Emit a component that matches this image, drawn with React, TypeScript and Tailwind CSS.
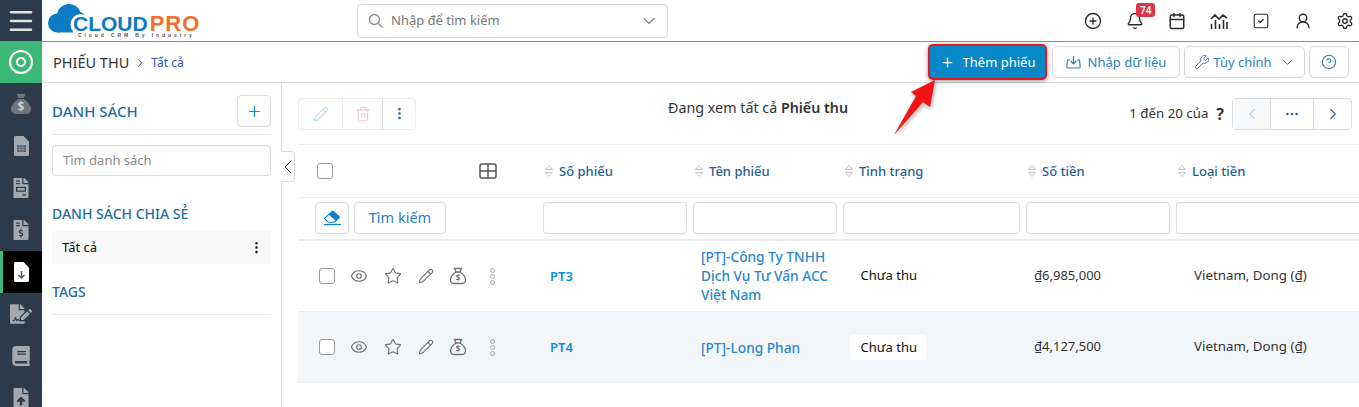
import { Bell, Calendar, ChevronDown, ChevronLeft, ChevronRight, CirclePlus, CircleHelp, Ellipsis, EllipsisVertical, Eye, Menu, Pencil, Plus, Settings, SquareCheck, Star, Trash2, UserRound, Wrench } from "lucide-react";
import { FaBook, FaFileInvoice, FaFileInvoiceDollar, FaFileSignature, FaFileUpload } from "react-icons/fa";

function SortIcon() {
  return (
    <svg width="10" height="14" viewBox="0 0 10 14" fill="none" stroke="#c4c4c4" strokeWidth="1" className="shrink-0">
      <path d="M1.500 5.500 5 1.500l3.500 4z" />
      <path d="M1.500 8.500 5 12.500l3.500-4z" />
    </svg>
  );
}

function BagIcon() {
  return (
    <svg width="18" height="18" viewBox="0 0 18 18" fill="none" stroke="#707070" strokeWidth="1.300" className="-ml-[1px]">
      <path d="M5.500 1.500h7L11 5H7z" />
      <path d="M7 5C4 7 1.500 10 1.500 13c0 2.500 2 3.500 4 3.500h7c2 0 4-1 4-3.500 0-3-2.500-6-5.500-8" />
      <text x="9" y="14" fontSize="8" textAnchor="middle" fill="#707070" stroke="none" fontWeight="700">$</text>
    </svg>
  );
}

function SideBag() {
  return (
    <svg width="22" height="22" viewBox="0 0 22 22">
      <path d="M6.500 1h9L13.500 5h-5z" fill="#6e747a" />
      <path d="M8.500 6h5C17 8 21 12 21 16c0 3.500-2.500 5-5 5H6c-2.500 0-5-1.500-5-5 0-4 4-8 7.500-10z" fill="#6e747a" />
      <text x="11" y="18" fontSize="12" textAnchor="middle" fill="#c9cdd1" fontWeight="700">$</text>
    </svg>
  );
}

function SideCalcFile() {
  return (
    <svg width="15" height="20" viewBox="0 0 15 20">
      <path d="M1.500 0H9.500L15 5.500V18.500c0 .8-.7 1.500-1.500 1.500h-12C.7 20 0 19.300 0 18.500v-17C0 .7.700 0 1.500 0z" fill="#a5a9af" />
      <path d="M3 9h9v7H3z" fill="#565d65" />
      <path d="M3 11.300h9M3 13.700h9M6 9v7M9 9v7" stroke="#a5a9af" strokeWidth=".6" />
    </svg>
  );
}

function ActiveFile() {
  return (
    <svg width="15" height="20" viewBox="0 0 15 20">
      <path d="M1.500 0H9.500L15 5.500V18.500c0 .8-.7 1.500-1.500 1.500h-12C.7 20 0 19.300 0 18.500v-17C0 .7.700 0 1.500 0z" fill="#fff" />
      <path d="M7.500 9v7M4.500 13l3 3 3-3" fill="none" stroke="#5a5a5a" strokeWidth="1.500" />
    </svg>
  );
}

function EraserIcon() {
  return (
    <svg width="19" height="17" viewBox="0 0 19 17">
      <path d="M1.500 9.500 8.700 2c.5-.5 1.300-.5 1.800 0l6 5.200c.5.5.5 1.200 0 1.700L12 13z" fill="#0d7fc4" />
      <path d="M1.500 9.500 5.200 13.300H11.500L13.200 11.500 6 5z" fill="#fff" stroke="#0d7fc4" strokeWidth="1.100" />
      <path d="M1 15.500h17" stroke="#0d7fc4" strokeWidth="1.300" />
    </svg>
  );
}

function Checkbox({ white }: { white?: boolean }) {
  return <div className={`w-4 h-4 rounded-[3px] border border-[#9a9a9a] ${white ? "bg-white" : ""}`}></div>;
}

function RowActions() {
  return (
    <div className="flex items-center w-[239px] pl-[21px]">
      <Checkbox white />
      <div className="flex items-center ml-[15px] gap-[16px] text-[#707070]">
        <Eye size={18} strokeWidth={1.600} />
        <Star size={18} strokeWidth={1.500} />
        <Pencil size={16} strokeWidth={1.600} />
        <BagIcon />
      </div>
      <div className="ml-[23px] flex flex-col gap-[1px]">
        <span className="w-[5px] h-[5px] rounded-full border border-[#aaa]"></span>
        <span className="w-[5px] h-[5px] rounded-full border border-[#aaa]"></span>
        <span className="w-[5px] h-[5px] rounded-full border border-[#aaa]"></span>
      </div>
    </div>
  );
}

function HeadCell({ label, w }: { label: string; w: string }) {
  return (
    <div className={`flex items-center gap-[5px] pl-[7px] font-medium text-[#1f5f8f] text-[13px] shrink-0 ${w}`}>
      <SortIcon />
      <span className="mt-[2px]">{label}</span>
    </div>
  );
}

const sideIcons = [
  <SideBag />,
  <SideCalcFile />,
  <FaFileInvoice size={20} />,
  <FaFileInvoiceDollar size={20} />,
];

export default function App() {
  return (
    <div className="relative w-[1359px] h-[407px] overflow-hidden bg-white flex text-[13px] text-[#222]" style={{ fontFamily: '"Noto Sans", sans-serif' }}>
      {/* Sidebar */}
      <div className="w-[42px] shrink-0 bg-[#2c3b4b] flex flex-col">
        <div className="h-[41px] shrink-0 flex items-center justify-center text-[#dfe3e6]">
          <Menu size={30} strokeWidth={2} />
        </div>
        <div className="h-[42px] shrink-0 bg-[#3cb878] flex items-center justify-center">
          <div className="w-[24px] h-[24px] rounded-full border-2 border-white flex items-center justify-center">
            <div className="w-[10px] h-[10px] rounded-full border-2 border-white"></div>
          </div>
        </div>
        {sideIcons.map((icon, i) => (
          <div key={i} className="h-[42px] shrink-0 flex items-center justify-center text-[#a5a9af]">{icon}</div>
        ))}
        <div className="h-[42px] shrink-0 bg-black border-l-[3px] border-[#3cb878] flex items-center justify-center pr-[3px]">
          <ActiveFile />
        </div>
        <div className="h-[42px] shrink-0 flex items-center justify-center text-[#a5a9af]"><FaFileSignature size={22} /></div>
        <div className="h-[42px] shrink-0 flex items-center justify-center text-[#a5a9af]"><FaBook size={20} /></div>
        <div className="h-[42px] shrink-0 flex items-center justify-center text-[#a5a9af]"><FaFileUpload size={20} /></div>
      </div>

      <div className="flex-1 min-w-0 flex flex-col">
        {/* Top bar */}
        <div className="h-[42px] border-b border-[#5fa882] flex items-center shrink-0">
          <div className="relative w-[315px] h-[41px] shrink-0">
            <svg width="40" height="34" viewBox="0 0 40 34" className="absolute left-[6px] top-[3px]">
              <circle cx="9.500" cy="20" r="9.500" fill="#0b7cc4" />
              <circle cx="21" cy="13" r="12" fill="#0b7cc4" />
              <circle cx="31" cy="16" r="7" fill="#0b7cc4" />
              <rect x="9" y="20" width="16" height="9.500" fill="#0b7cc4" />
              <circle cx="33" cy="21.500" r="10.500" fill="#fff" />
            </svg>
            <div className="absolute left-[31px] top-[16px] flex font-bold text-[21px] leading-[16px]" style={{ fontFamily: '"Liberation Sans", sans-serif' }}>
              <span className="text-[#0b7cc4]">CLOUD</span>
              <span className="text-[#f26f2e] ml-[2px] text-[22px] tracking-[1px]">PRO</span>
            </div>
            <div className="absolute left-[36px] top-[33px] text-[5px] leading-[5px] tracking-[2.900px] text-[#555] font-bold whitespace-nowrap" style={{ fontFamily: '"Liberation Sans", sans-serif' }}>Cloud CRM By Industry</div>
          </div>
          <div className="w-[311px] h-[34px] border border-[#d9d9d9] rounded-[4px] flex items-center pl-[10px] pr-[8px] text-[#777]">
            <svg width="16" height="16" viewBox="0 0 16 16" fill="none" stroke="#888" strokeWidth="1.300"><circle cx="6.500" cy="6.500" r="5" /><path d="m10.500 10.500 4 4" /></svg>
            <span className="ml-[7px] flex-1">Nhập để tìm kiếm</span>
            <ChevronDown size={20} strokeWidth={1.300} className="text-[#888]" />
          </div>
          <div className="ml-auto flex items-center gap-[24px] pr-[5px] text-[#2b2b2b]">
            <CirclePlus size={18} strokeWidth={1.800} />
            <div className="relative">
              <Bell size={18} strokeWidth={1.800} />
              <span className="absolute left-[10px] -top-[9px] h-[14px] px-[4px] rounded-[3px] bg-[#dc3545] text-white text-[10px] leading-[14px] font-semibold">74</span>
            </div>
            <Calendar size={18} strokeWidth={2} />
            <svg width="18" height="18" viewBox="0 0 18 18" fill="none" stroke="#2b2b2b" strokeWidth="1.600">
              <path d="M1 7l4-4 4 4 4-4 4 3" />
              <path d="M1.500 17v-5M5.500 17V8M9.500 17v-5M13.500 17V8M17 17v-7" />
            </svg>
            <SquareCheck size={18} strokeWidth={1.500} />
            <UserRound size={18} strokeWidth={1.800} />
            <Settings size={18} strokeWidth={1.800} />
          </div>
        </div>

        {/* Breadcrumb bar */}
        <div className="h-[41px] border-b border-[#dedede] flex items-center shrink-0">
          <div className="pl-[11px] mt-[2px] text-[14.500px] text-[#333]">PHIẾU THU</div>
          <ChevronRight size={14} strokeWidth={1.700} className="ml-[4px] mt-[2px] text-[#444]" />
          <div className="ml-[4px] mt-[2px] text-[12px] text-[#2a55c5]">Tất cả</div>
          <div className="ml-auto flex items-center pr-[10px] text-[13px]">
            <button className="w-[119px] h-[36px] rounded-[5px] border-2 border-[#e01b24] bg-[#0788c9] text-white flex items-center justify-center gap-[8px] shadow-[0_1px_5px_rgba(0,0,0,0.45)]">
              <Plus size={15} strokeWidth={2} />
              <span className="mt-[1px]">Thêm phiếu</span>
            </button>
            <button className="ml-[5px] w-[128px] h-[32px] rounded-[5px] border border-[#d9d9d9] text-[#2a7fc0] flex items-center justify-center gap-[7px]">
              <svg width="15" height="14" viewBox="0 0 15 14" fill="none" stroke="#2a7fc0" strokeWidth="1.200">
                <path d="M7.500 1v7.500M4.500 6l3 3 3-3" />
                <path d="M4 5H1.500L.8 11.500c0 .8.500 1.500 1.200 1.500h11c.7 0 1.200-.7 1.200-1.500L13.500 5H11" />
              </svg>
              <span className="mt-[1px]">Nhập dữ liệu</span>
            </button>
            <button className="ml-[4px] w-[121px] h-[32px] rounded-[5px] border border-[#d9d9d9] text-[#2a7fc0] flex items-center justify-center gap-[3px]">
              <Wrench size={16} strokeWidth={1.400} />
              <span className="mt-[1px]">Tùy chỉnh</span>
              <ChevronDown size={15} strokeWidth={1.600} className="ml-[5px]" />
            </button>
            <button className="ml-[4px] w-[40px] h-[32px] rounded-[5px] border border-[#d9d9d9] text-[#2a7fc0] flex items-center justify-center">
              <CircleHelp size={16} strokeWidth={1.600} />
            </button>
          </div>
        </div>

        <div className="flex-1 min-h-0 flex">
          {/* Left panel */}
          <div className="relative w-[240px] shrink-0 border-r border-[#dedede] pl-[10px] pr-[10px] z-10">
            <div className="h-[52px] pt-[5px] border-b border-[#e8e8e8] flex items-center justify-between">
              <span className="text-[15px] font-medium text-[#1f6ca3]">DANH SÁCH</span>
              <div className="w-[34px] h-[32px] rounded-[4px] border border-[#dcdcdc] flex items-center justify-center text-[#0d8fd8]">
                <Plus size={17} strokeWidth={1.700} />
              </div>
            </div>
            <div className="mt-[10px] h-[31px] pt-[1px] rounded-[4px] border border-[#dcdcdc] flex items-center pl-[10px] text-[13px] text-[#8a8a8a]">Tìm danh sách</div>
            <div className="mt-[28px] text-[14px] font-medium text-[#1f6ca3] leading-[20px]">DANH SÁCH CHIA SẺ</div>
            <div className="mt-[7px] h-[33px] bg-[#f7f7f7] flex items-center justify-between pl-[10px] pr-[7px] text-[#111]">
              <span>Tất cả</span>
              <EllipsisVertical size={15} strokeWidth={2} />
            </div>
            <div className="mt-[18px] pb-[12px] border-b border-[#e8e8e8] text-[14px] font-medium text-[#1f6ca3] leading-[20px]">TAGS</div>
            <div className="absolute left-full top-[68px] w-[14px] h-[31px] bg-white border border-l-0 border-[#dcdcdc] rounded-r-[4px] flex items-center justify-center text-[#222]">
              <ChevronLeft size={24} strokeWidth={1} className="shrink-0" />
            </div>
          </div>

          {/* Main */}
          <div className="flex-1 min-w-0 pl-[16px]">
            <div className="h-[61px] flex items-center relative">
              <div className="flex items-center h-[32px] rounded-[4px] border border-[#ececec]">
                <div className="w-[43px] h-full flex items-center justify-center text-[#a6d4f2]"><Pencil size={16} strokeWidth={1.500} /></div>
                <div className="w-[40px] h-full border-l border-[#ececec] flex items-center justify-center text-[#f5bcc4]"><Trash2 size={16} strokeWidth={1.400} /></div>
                <div className="w-[33px] h-full border-l border-[#dcdcdc] flex items-center justify-center text-[#1f6ca3]"><EllipsisVertical size={15} strokeWidth={2.200} /></div>
              </div>
              <div className="ml-[252px] text-[14.300px] text-[#333] -mt-[11px] whitespace-nowrap">Đang xem tất cả <span className="font-semibold">Phiếu thu</span></div>
              <div className="ml-auto flex items-center pr-[7px]">
                <span className="text-[13.300px] text-[#333]">1 đến 20 của</span>
                <span className="ml-[8px] font-bold text-[16px] text-[#333]">?</span>
                <div className="ml-[8px] flex items-center h-[32px] rounded-[4px] border border-[#dcdcdc]">
                  <div className="w-[37px] h-full bg-[#f8f9fa] flex items-center justify-center text-[#a6d4f2]"><ChevronLeft size={18} strokeWidth={1.500} /></div>
                  <div className="w-[43px] h-full border-l border-[#dcdcdc] flex items-center justify-center text-[#1f6ca3]"><Ellipsis size={16} strokeWidth={2} /></div>
                  <div className="w-[38px] h-full border-l border-[#dcdcdc] flex items-center justify-center text-[#1f6ca3]"><ChevronRight size={18} strokeWidth={1.500} /></div>
                </div>
              </div>
            </div>

            {/* Table */}
            <div className="border-t border-[#ececec] h-[53px] flex items-center">
              <div className="w-[239px] shrink-0 pl-[19px] flex items-center">
                <Checkbox />
                <svg width="18" height="16" viewBox="0 0 18 16" fill="none" stroke="#555" strokeWidth="1.500" className="ml-[146px]">
                  <rect x="1" y="1" width="16" height="14" rx="2" />
                  <path d="M9 1v14M1 8h16" />
                </svg>
              </div>
              <HeadCell label="Số phiếu" w="w-[150px]" />
              <HeadCell label="Tên phiếu" w="w-[150px]" />
              <HeadCell label="Tình trạng" w="w-[183px]" />
              <HeadCell label="Số tiền" w="w-[150px]" />
              <HeadCell label="Loại tiền" w="w-[170px]" />
            </div>
            <div className="border-t border-[#ececec] border-b-2 h-[44px] pb-[2px] flex items-center">
              <div className="w-[245px] shrink-0 pl-[17px] flex items-center gap-[5px]">
                <div className="w-[34px] h-[32px] rounded-[4px] border border-[#dcdcdc] flex items-center justify-center"><EraserIcon /></div>
                <div className="w-[92px] h-[32px] rounded-[4px] border border-[#dcdcdc] flex items-center justify-center text-[14.500px] text-[#2a7fc0]">Tìm kiếm</div>
              </div>
              <div className="w-[144px] h-[32px] shrink-0 rounded-[4px] border border-[#dcdcdc]"></div>
              <div className="ml-[6px] w-[144px] h-[32px] shrink-0 rounded-[4px] border border-[#dcdcdc]"></div>
              <div className="ml-[6px] w-[177px] h-[32px] shrink-0 rounded-[4px] border border-[#dcdcdc]"></div>
              <div className="ml-[6px] w-[144px] h-[32px] shrink-0 rounded-[4px] border border-[#dcdcdc]"></div>
              <div className="ml-[6px] w-[190px] h-[32px] shrink-0 rounded-l-[4px] border border-r-0 border-[#dcdcdc]"></div>
            </div>
            <div className="h-[71px] flex items-center border-b border-[#ececec]">
              <RowActions />
              <div className="w-[150px] pl-[13px] mt-[1px] font-semibold text-[#0d8fd8]">PT3</div>
              <div className="w-[150px] pl-[14px] pr-[2px] -mt-[1px] font-medium text-[13.700px] text-[#2a86cc] leading-[19px]">[PT]-Công Ty TNHH Dịch Vụ Tư Vấn ACC Việt Nam</div>
              <div className="w-[183px] pl-[13px] -mt-[1px]"><span className="inline-block px-[10.500px] leading-[25px] rounded-[4px] text-[#111]">Chưa thu</span></div>
              <div className="w-[150px] pl-[14px] text-[#333]">₫6,985,000</div>
              <div className="w-[170px] pl-[24px] text-[13.300px] text-[#333] whitespace-nowrap">Vietnam, Dong (₫)</div>
            </div>
            <div className="h-[71px] flex items-center border-b border-[#ececec] bg-[#f3f6f9]">
              <RowActions />
              <div className="w-[150px] pl-[13px] mt-[1px] font-semibold text-[#0d8fd8]">PT4</div>
              <div className="w-[150px] pl-[14px] pr-[2px] font-medium text-[13.700px] text-[#2a86cc] leading-[19px]">[PT]-Long Phan</div>
              <div className="w-[183px] pl-[13px]"><span className="inline-block px-[10.500px] leading-[25px] rounded-[4px] bg-white text-[#111]">Chưa thu</span></div>
              <div className="w-[150px] pl-[14px] text-[#333]">₫4,127,500</div>
              <div className="w-[170px] pl-[24px] text-[13.300px] text-[#333] whitespace-nowrap">Vietnam, Dong (₫)</div>
            </div>
          </div>
        </div>
      </div>

      {/* Red arrow annotation */}
      <svg width="60" height="70" viewBox="0 0 60 70" className="absolute left-[885px] top-[75px]" style={{ filter: "drop-shadow(1px 2px 2px rgba(0,0,0,0.35))" }}>
        <path d="M9 60 31 21 26 17 50 5 45 32 38 27z" fill="#f01414" />
      </svg>
    </div>
  );
}
